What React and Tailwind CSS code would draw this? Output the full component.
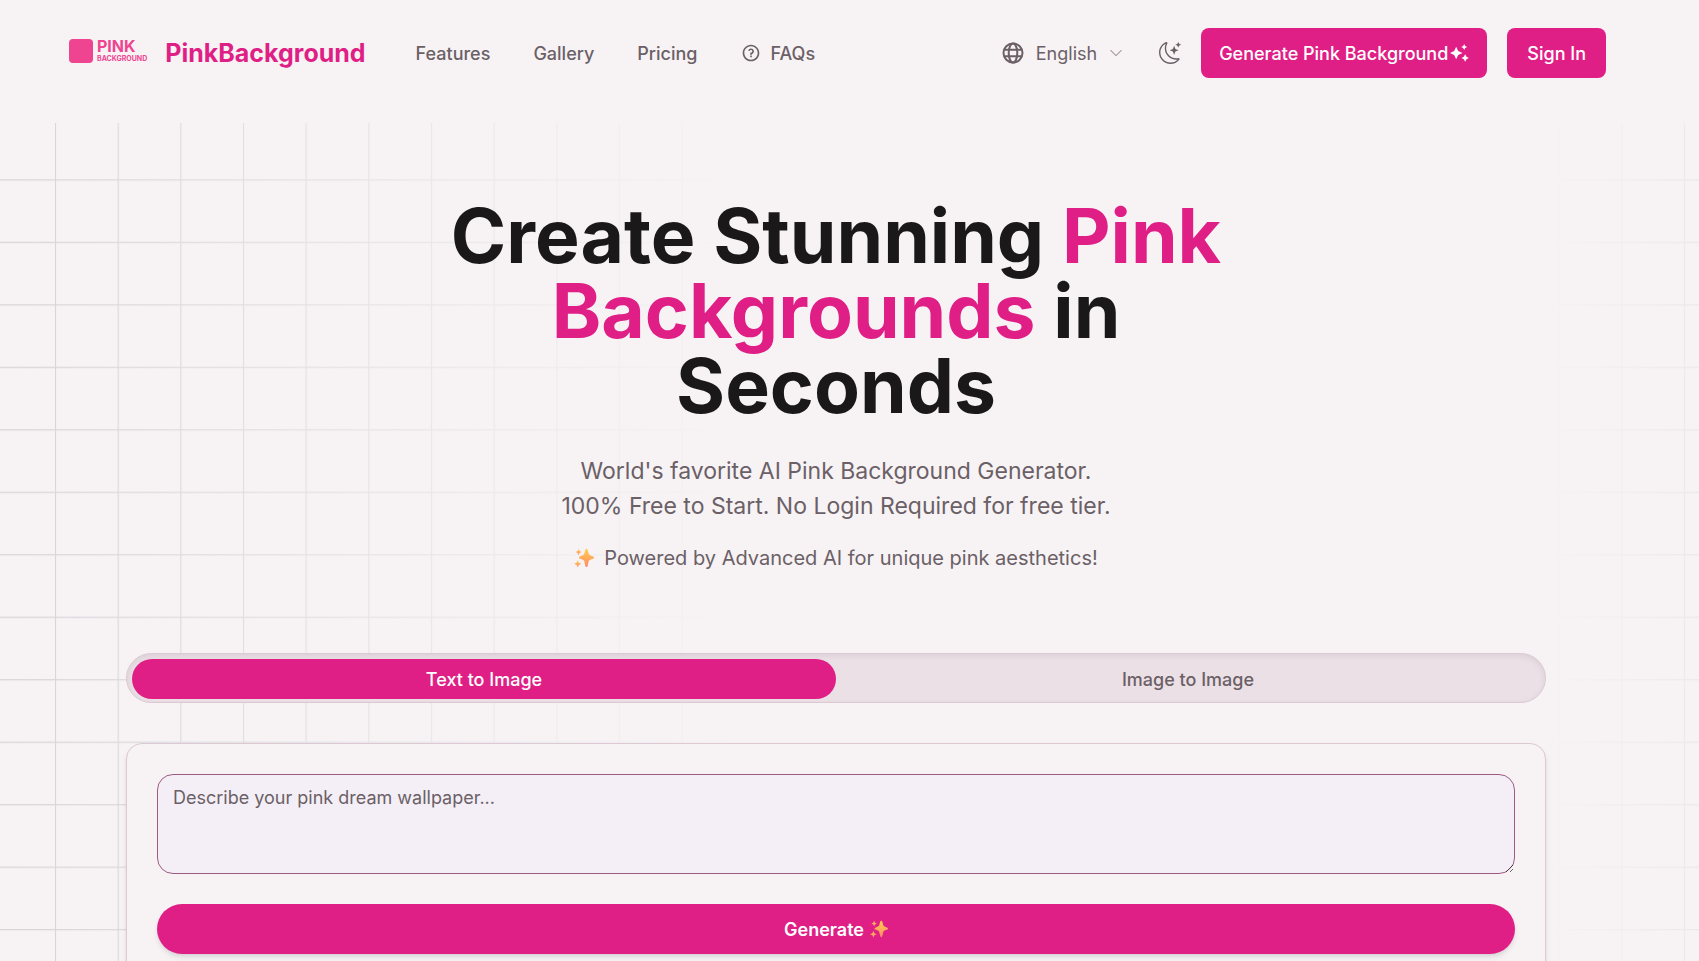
import { BsChevronDown, BsMoonStars } from "react-icons/bs";
import { RiQuestionLine } from "react-icons/ri";

const navLinks = ["Features", "Gallery", "Pricing"];

function Sparkle({ className }) {
  return (
    <svg viewBox="0 0 24 24" className={className} aria-hidden="true">
      <defs>
        <linearGradient id="spark" x1="0" y1="0" x2="0" y2="1">
          <stop offset="0" stopColor="#ffcf4a" />
          <stop offset="1" stopColor="#ff8a6b" />
        </linearGradient>
      </defs>
      <g fill="url(#spark)">
        <path d="M15 1c.7 0 1.100.4 1.300 1.100l1.400 4.900c.3 1 .8 1.500 1.800 1.800L23 10.200c1.300.5 1.300 2.100 0 2.600l-3.500 1.300c-1 .4-1.500.9-1.800 1.900L16.300 21.800c-.4 1.400-2.200 1.400-2.600 0L12.300 16c-.3-1-.8-1.500-1.800-1.900L7 12.800c-1.300-.5-1.300-2.100 0-2.600l3.500-1.400c1-.3 1.500-.8 1.800-1.800l1.400-4.900C13.900 1.400 14.300 1 15 1z" />
        <path d="M5.500 1l1.100 2.700 2.600 1.100-2.600 1.100-1.100 2.700-1.100-2.700-2.600-1.100 2.600-1.100z" />
        <path d="M4.500 14.500l1.300 3.200L9 19l-3.200 1.300-1.300 3.200-1.300-3.200L0 19l3.200-1.300z" />
      </g>
    </svg>
  );
}

function SparklesSolid({ className }) {
  return (
    <svg viewBox="0 0 56 54" fill="currentColor" className={className} aria-hidden="true">
      <path d="M18 8l6 13 13 6-13 6-6 13-6-13-13-6 13-6z" />
      <path d="M42 0l3 6 6 3-6 3-3 6-3-6-6-3 6-3z" />
      <path d="M45 31l4 7.500 7 3.500-7 3.500-4 7.500-4-7.500-7-3.500 7-3.500z" />
    </svg>
  );
}

function Globe({ className }) {
  return (
    <svg
      viewBox="0 0 22 22"
      fill="none"
      stroke="currentColor"
      strokeWidth="2"
      className={className}
      aria-hidden="true"
    >
      <circle cx="11" cy="11" r="9.500" />
      <ellipse cx="11" cy="11" rx="4.300" ry="9.500" />
      <path d="M2.300 7.700h17.400M2.300 14.300h17.400" />
    </svg>
  );
}

function GridBackdrop() {
  return (
    <svg
      className="absolute inset-0 -z-10 h-full w-full [mask-image:linear-gradient(to_right,black,transparent_43%,transparent_91%,rgb(0_0_0/0.35))]"
      aria-hidden="true"
    >
      <defs>
        <pattern
          id="grid"
          x="55"
          y="56.300"
          width="62.650"
          height="62.480"
          patternUnits="userSpaceOnUse"
        >
          <path d="M.5 63V.5H63" fill="none" stroke="#d6d3d5" strokeWidth="1.250" />
        </pattern>
      </defs>
      <rect width="100%" height="100%" fill="url(#grid)" />
    </svg>
  );
}

function Logo() {
  return (
    <a href="#" className="flex items-center gap-[18px] pl-[3px] text-[#e01f86]">
      <span className="flex gap-1 pb-1 text-[#ef4590]">
        <span className="size-6 rounded-sm bg-[#ef4590]" />
        <span className="flex flex-col justify-between font-bold">
          <span className="text-[16px] leading-[14px]">PINK</span>
          <span className="text-[7px] leading-[8px]">BACKGROUND</span>
        </span>
      </span>
      <span className="text-[25px] leading-8 font-bold">PinkBackground</span>
    </a>
  );
}

function Header() {
  return (
    <header className="mx-auto flex h-[106px] max-w-[1540px] items-center justify-between">
      <div className="flex items-center gap-[50px]">
        <Logo />
        <nav className="flex items-center gap-[43px] text-[18px] font-medium text-[#6b6066]">
          {navLinks.map((label) => (
            <a key={label} href="#">
              {label}
            </a>
          ))}
          <a href="#" className="flex items-center gap-2.5">
            <RiQuestionLine className="size-5" />
            FAQs
          </a>
        </nav>
      </div>
      <div className="flex items-center gap-5 text-[#6b6066]">
        <button className="flex items-center gap-3 text-[18px]">
          <Globe className="size-[22px]" />
          English
          <BsChevronDown className="size-[14px] text-[#9b9297]" />
        </button>
        <button aria-label="Toggle dark mode" className="ml-4">
          <BsMoonStars className="size-[22px]" />
        </button>
        <button className="flex h-[50px] items-center gap-0.5 rounded-lg bg-[#e01f86] px-[18px] text-[18px] font-medium text-white">
          Generate Pink Background
          <SparklesSolid className="h-[18px] w-[19px]" />
        </button>
        <button className="h-[50px] rounded-lg bg-[#e01f86] px-5 text-[18px] font-medium text-white">
          Sign In
        </button>
      </div>
    </header>
  );
}

function Generator() {
  return (
    <div className="mx-auto max-w-[1420px]">
      <div
        role="tablist"
        className="grid grid-cols-2 rounded-full border border-[#dcc9d3] bg-[#ebe0e6] px-[5px] pt-[5px] pb-[3px] text-[18px] font-medium inset-shadow-[0_2px_6px_rgb(0_0_0/0.08)]"
      >
        <button
          role="tab"
          aria-selected="true"
          className="h-10 rounded-full bg-[#e01f86] text-white"
        >
          Text to Image
        </button>
        <button role="tab" aria-selected="false" className="h-10 text-[#6b6066]">
          Image to Image
        </button>
      </div>
      <div className="mt-10 rounded-2xl border border-[#dcc9d3] bg-[#f7f3f5] p-[30px] shadow-md">
        <textarea
          aria-label="Prompt"
          placeholder="Describe your pink dream wallpaper..."
          className="block h-[100px] w-full rounded-2xl border border-[#9d5b80] bg-[#f4eff6] px-[15px] py-2.5 text-[18px] leading-[25px] placeholder:text-[#6b6066]"
        />
        <button className="mt-[30px] flex h-[50px] w-full items-center justify-center gap-1.5 rounded-full bg-[#e01f86] text-[18px] font-semibold text-white shadow-md">
          Generate
          <Sparkle className="size-[18px]" />
        </button>
      </div>
    </div>
  );
}

export default function App() {
  return (
    <div className="min-h-screen bg-[#f7f3f5] font-[Inter,sans-serif] text-[#1b181a]">
      <div className="pr-[27px]">
        <Header />
      </div>
      <main className="relative isolate mt-[17px] h-[calc(100vh-123px)] overflow-hidden pr-[27px]">
        <GridBackdrop />
        <section className="mx-auto flex max-w-[840px] flex-col items-center pt-[75px] text-center">
          <h1 className="text-[75px] leading-[75px] font-bold">
            Create Stunning <span className="text-[#e01f86]">Pink Backgrounds</span> in
            Seconds
          </h1>
          <p className="mt-[31px] text-[23px] leading-[35px] text-[#6b6066]">
            World's favorite AI Pink Background Generator.
            <br />
            100% Free to Start. No Login Required for free tier.
          </p>
          <p className="mt-[19px] mb-20 flex items-center gap-2.5 text-[20px] leading-[30px] text-[#6b6066]">
            <Sparkle className="size-5" />
            Powered by Advanced AI for unique pink aesthetics!
          </p>
        </section>
        <Generator />
      </main>
    </div>
  );
}
